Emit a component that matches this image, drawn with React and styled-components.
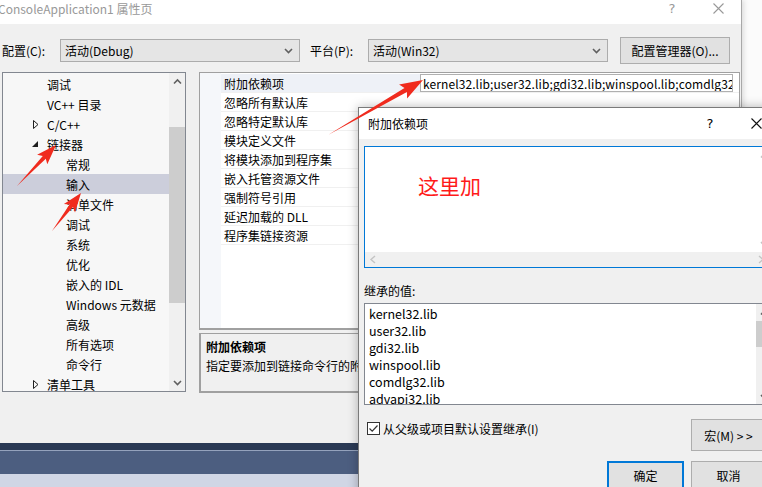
import React from "react"
import styled, { createGlobalStyle } from "styled-components"

// -----------------------------------------------------------------------------
// Global
// -----------------------------------------------------------------------------

const GlobalStyle = createGlobalStyle`
  html, body {
    margin: 0;
    padding: 0;
  }
  body {
    font-family: "Noto Sans CJK SC", "Noto Sans", sans-serif;
    font-size: 12px;
    color: #000;
  }
`

// -----------------------------------------------------------------------------
// Small drawings
// -----------------------------------------------------------------------------

const Chevron = ({ dir = "down", color = "#606060", size = 9 }) => {
  const pts = dir === "down" ? "1,3 4.5,6.5 8,3" : "1,6.5 4.5,3 8,6.5"
  return (
    <svg width={size} height={size} viewBox="0 0 9 9">
      <polyline points={pts} fill="none" stroke={color} strokeWidth="1.6" />
    </svg>
  )
}

const SideChevron = ({ dir = "left" }) => {
  const pts = dir === "left" ? "6,1 2,4.5 6,8" : "3,1 7,4.5 3,8"
  return (
    <svg width="9" height="9" viewBox="0 0 9 9">
      <polyline points={pts} fill="none" stroke="#c4c4c4" strokeWidth="1.4" />
    </svg>
  )
}

const CloseCross = ({ color }) => (
  <svg width="11" height="11" viewBox="0 0 11 11">
    <path d="M0.5 0.5 L10.5 10.5 M10.5 0.5 L0.5 10.5" stroke={color} strokeWidth="1.1" fill="none" />
  </svg>
)

const Expander = ({ open }) =>
  open ? (
    <svg width="7" height="7" viewBox="0 0 7 7">
      <polygon points="6,0 6,6 0,6" fill="#1e1e1e" />
    </svg>
  ) : (
    <svg width="6" height="9" viewBox="0 0 6 9">
      <polygon points="0.5,0.5 5,4.5 0.5,8.5" fill="none" stroke="#1e1e1e" />
    </svg>
  )

const arrowPoints = (tx, ty, hx, hy, hl, hw) => {
  const len = Math.hypot(hx - tx, hy - ty)
  const ux = (hx - tx) / len
  const uy = (hy - ty) / len
  const nx = -uy
  const ny = ux
  const bx = hx - ux * hl
  const by = hy - uy * hl
  const sw = hw * 0.3
  const wx = bx - ux * 3
  const wy = by - uy * 3
  return [
    [tx, ty],
    [bx + nx * sw, by + ny * sw],
    [wx + nx * hw, wy + ny * hw],
    [hx, hy],
    [wx - nx * hw, wy - ny * hw],
    [bx - nx * sw, by - ny * sw],
  ]
    .map((p) => p.map((v) => v.toFixed(1)).join(","))
    .join(" ")
}

const ARROWS = [
  { t: [328, 135], h: [423, 80], hl: 20, hw: 8 },
  { t: [17, 186], h: [56, 145], hl: 17, hw: 7 },
  { t: [52, 231], h: [81, 193], hl: 16, hw: 7 },
]

// -----------------------------------------------------------------------------
// Sub-components: desktop / main window
// -----------------------------------------------------------------------------

const Desktop = styled.div`
  position: relative;
  width: 762px;
  height: 487px;
  overflow: hidden;
  background: #fbfbfb;
  display: flex;
  flex-direction: column;
`

const TopArea = styled.div`
  display: flex;
  height: 443px;
  flex-shrink: 0;
`

const MainWindow = styled.div`
  width: 741px;
  border-right: 1px solid #a8a8a8;
  box-shadow: 2px 0 5px rgba(0, 0, 0, 0.12);
  background: #f0f0f0;
  display: flex;
  flex-direction: column;
`

const TitleBar = styled.div`
  height: ${({ $h }) => $h || 24}px;
  flex-shrink: 0;
  background: #fff;
  display: flex;
  align-items: ${({ $top }) => ($top ? "flex-start" : "center")};
`

const TitleText = styled.span`
  flex: 1;
  margin-left: -2px;
  line-height: 17px;
  color: ${({ $active }) => ($active ? "#000" : "#999")};
  font-size: 12px;
  padding-left: ${({ $pad }) => $pad || 0}px;
`

const CaptionButton = styled.div`
  width: 46px;
  height: 17px;
  display: flex;
  align-items: center;
  justify-content: center;
  color: ${({ $active }) => ($active ? "#000" : "#999")};
  font-size: 13px;
  font-family: "DejaVu Sans", sans-serif;
`

const ConfigRow = styled.div`
  height: 48px;
  display: flex;
  align-items: center;
  padding: 4px 0 0 2px;
  box-sizing: border-box;
`

const FieldLabel = styled.span`
  width: 58px;
  margin-left: ${({ $gap }) => $gap || 0}px;
`

const Combo = styled.div`
  width: 240px;
  height: 23px;
  box-sizing: border-box;
  border: 1px solid #acacac;
  background: #e5e5e5;
  display: flex;
  align-items: center;
  justify-content: space-between;
  padding: 0 6px 0 4px;
`

const PushButton = styled.div`
  box-sizing: border-box;
  width: ${({ $w }) => $w}px;
  height: ${({ $h }) => $h || 27}px;
  margin-left: ${({ $ml }) => $ml || 0}px;
  margin-top: ${({ $mt }) => $mt || 0}px;
  border: ${({ $default }) => ($default ? "2px solid #0078d7" : "1px solid #adadad")};
  background: #e1e1e1;
  display: flex;
  align-items: center;
  justify-content: center;
  flex-shrink: 0;
  white-space: pre;
`

const Body = styled.div`
  display: flex;
  padding-left: 2px;
  gap: 13px;
`

// Tree ------------------------------------------------------------------------

const Tree = styled.div`
  width: 184px;
  height: 320px;
  box-sizing: border-box;
  border: 1px solid #828790;
  background: #f7f7f7;
  display: flex;
`

const TreeList = styled.div`
  flex: 1;
  padding-top: 1px;
  overflow: hidden;
`

const TreeRow = styled.div`
  height: 20px;
  display: flex;
  align-items: center;
  background: ${({ $selected }) => ($selected ? "#cccedb" : "transparent")};
  white-space: nowrap;
`

const TreeToggle = styled.span`
  width: ${({ $level }) => ($level === 1 ? 44 : 63)}px;
  display: flex;
  justify-content: flex-end;
  padding-right: 8px;
  box-sizing: border-box;
`

const VScroll = styled.div`
  width: ${({ $w }) => $w || 16}px;
  background: ${({ $bg }) => $bg || "#f0f0f0"};
  display: flex;
  flex-direction: column;
  align-items: center;
  flex-shrink: 0;
`

const ScrollArrow = styled.div`
  height: ${({ $h }) => $h || 17}px;
  width: 100%;
  display: flex;
  align-items: center;
  justify-content: center;
  flex-shrink: 0;
`

const ScrollTrack = styled.div`
  flex: 1;
  width: 100%;
  display: flex;
  flex-direction: column;
  align-items: center;
`

const ScrollThumb = styled.div`
  width: ${({ $w }) => $w || 16}px;
  height: ${({ $h }) => $h}px;
  margin-top: ${({ $top }) => $top}px;
  background: #cdcdcd;
`

// Property grid ---------------------------------------------------------------

const RightColumn = styled.div`
  width: 541px;
  display: flex;
  flex-direction: column;
  gap: 3px;
`

const PropGrid = styled.div`
  height: 258px;
  box-sizing: border-box;
  border: 1px solid #a0a0a0;
  border-bottom-width: 2px;
  background: #fff;
  display: flex;
`

const PropMargin = styled.div`
  width: 21px;
  background: #f5f7fa;
`

const PropRows = styled.div`
  flex: 1;
  padding-top: 1px;
`

const PropRow = styled.div`
  height: 19px;
  display: flex;
  box-sizing: border-box;
  border-bottom: 1px solid #f0f0f0;
`

const PropName = styled.div`
  width: 196px;
  padding-left: 3px;
  display: flex;
  align-items: center;
  background: ${({ $selected }) => ($selected ? "#eef1f7" : "#fff")};
  white-space: nowrap;
`

const PropValue = styled.div`
  width: 313px;
  box-sizing: border-box;
  padding-left: 2px;
  display: flex;
  align-items: center;
  white-space: nowrap;
  overflow: hidden;
  letter-spacing: 0.1px;
  border: ${({ $editing }) => ($editing ? "1px solid #b0b0b0" : "none")};
  background: #fff;
`

const DescBox = styled.div`
  width: 160px;
  height: 60px;
  box-sizing: border-box;
  border: 2px solid #a0a0a0;
  border-top-width: 1px;
  border-right: none;
  padding: 3px 0 0 5px;
  line-height: 19px;
  white-space: nowrap;
  overflow: hidden;
`

const DescTitle = styled.div`
  font-weight: bold;
`

// IDE behind ------------------------------------------------------------------

const IdeBand = styled.div`
  height: ${({ $h }) => $h}px;
  background: ${({ $c }) => $c};
  flex-shrink: 0;
`

// -----------------------------------------------------------------------------
// Sub-components: dialog
// -----------------------------------------------------------------------------

const Dialog = styled.div`
  position: absolute;
  left: 358px;
  top: 107px;
  width: 422px;
  height: 392px;
  box-sizing: border-box;
  border: 1px solid #7a7a7a;
  box-shadow: 0 0 10px rgba(0, 0, 0, 0.28);
  background: #f0f0f0;
  display: flex;
  flex-direction: column;
`

const DialogBody = styled.div`
  padding: 7px 5px 0 5px;
  display: flex;
  flex-direction: column;
`

const EditBox = styled.div`
  width: 410px;
  height: 122px;
  box-sizing: border-box;
  border: 1px solid #0078d7;
  background: #fff;
  display: grid;
  grid-template-columns: 1fr 17px;
  grid-template-rows: 1fr 15px;
`

const EditText = styled.div`
  color: #ff1a1a;
  font-size: 21px;
  padding: 23px 0 0 53px;
`

const HScroll = styled.div`
  grid-column: 1 / 3;
  background: #f0f0f0;
  display: flex;
  align-items: center;
  justify-content: space-between;
  padding: 0 8px 0 4px;
`

const SectionLabel = styled.div`
  margin-top: 14px;
  height: 21px;
`

const ListBox = styled.div`
  width: 410px;
  height: 102px;
  box-sizing: border-box;
  border: 1px solid #828790;
  background: #fff;
  display: flex;
`

const ListItems = styled.div`
  flex: 1;
  padding: 1px 0 0 4px;
  overflow: hidden;
  font-size: 12.5px;
`

const ListItem = styled.div`
  height: 17px;
  line-height: 17px;
`

const FooterRow = styled.div`
  display: flex;
  align-items: flex-start;
  padding-right: 8px;
  margin-top: ${({ $mt }) => $mt}px;
  justify-content: ${({ $end }) => ($end ? "flex-end" : "flex-start")};
  gap: 7px;
`

const CheckLabel = styled.label`
  display: flex;
  align-items: center;
  gap: 3px;
  margin: 15px 0 0 3px;
  flex: 1;
`

const CheckBox = styled.span`
  width: 13px;
  height: 13px;
  box-sizing: border-box;
  border: 1px solid #333;
  background: #fff;
  display: flex;
  align-items: center;
  justify-content: center;
`

const ArrowLayer = styled.svg`
  position: absolute;
  left: 0;
  top: 0;
  pointer-events: none;
`

// -----------------------------------------------------------------------------
// Data
// -----------------------------------------------------------------------------

const TREE = [
  { label: "调试", level: 1 },
  { label: "VC++ 目录", level: 1 },
  { label: "C/C++", level: 1, toggle: "closed" },
  { label: "链接器", level: 1, toggle: "open" },
  { label: "常规", level: 2 },
  { label: "输入", level: 2, selected: true },
  { label: "清单文件", level: 2 },
  { label: "调试", level: 2 },
  { label: "系统", level: 2 },
  { label: "优化", level: 2 },
  { label: "嵌入的 IDL", level: 2 },
  { label: "Windows 元数据", level: 2 },
  { label: "高级", level: 2 },
  { label: "所有选项", level: 2 },
  { label: "命令行", level: 2 },
  { label: "清单工具", level: 1, toggle: "closed" },
]

const PROPS = [
  "附加依赖项",
  "忽略所有默认库",
  "忽略特定默认库",
  "模块定义文件",
  "将模块添加到程序集",
  "嵌入托管资源文件",
  "强制符号引用",
  "延迟加载的 DLL",
  "程序集链接资源",
]

const LIBS = ["kernel32.lib", "user32.lib", "gdi32.lib", "winspool.lib", "comdlg32.lib", "advapi32.lib"]

// -----------------------------------------------------------------------------
// Component
// -----------------------------------------------------------------------------

const App = () => {
  return (
    <>
      <GlobalStyle />
      <Desktop>
        <TopArea>
          <MainWindow>
            <TitleBar $top>
              <TitleText>ConsoleApplication1 属性页</TitleText>
              <CaptionButton>?</CaptionButton>
              <CaptionButton>
                <CloseCross color="#999" />
              </CaptionButton>
            </TitleBar>

            <ConfigRow>
              <FieldLabel>配置(C):</FieldLabel>
              <Combo>
                <span>活动(Debug)</span>
                <Chevron />
              </Combo>
              <FieldLabel $gap={10}>平台(P):</FieldLabel>
              <Combo>
                <span>活动(Win32)</span>
                <Chevron />
              </Combo>
              <PushButton $w={110} $ml={12}>配置管理器(O)...</PushButton>
            </ConfigRow>

            <Body>
              <Tree>
                <TreeList>
                  {TREE.map((item, i) => (
                    <TreeRow key={i} $selected={item.selected}>
                      <TreeToggle $level={item.level}>
                        {item.toggle && <Expander open={item.toggle === "open"} />}
                      </TreeToggle>
                      {item.label}
                    </TreeRow>
                  ))}
                </TreeList>
                <VScroll>
                  <ScrollArrow>
                    <Chevron dir="up" />
                  </ScrollArrow>
                  <ScrollTrack>
                    <ScrollThumb $top={37} $h={176} />
                  </ScrollTrack>
                  <ScrollArrow>
                    <Chevron dir="down" />
                  </ScrollArrow>
                </VScroll>
              </Tree>

              <RightColumn>
                <PropGrid>
                  <PropMargin />
                  <PropRows>
                    {PROPS.map((name, i) => (
                      <PropRow key={name}>
                        <PropName $selected={i === 0}>{name}</PropName>
                        <PropValue $editing={i === 0}>
                          {i === 0 ? "kernel32.lib;user32.lib;gdi32.lib;winspool.lib;comdlg32.lib" : ""}
                        </PropValue>
                      </PropRow>
                    ))}
                  </PropRows>
                </PropGrid>
                <DescBox>
                  <DescTitle>附加依赖项</DescTitle>
                  <div>指定要添加到链接命令行的附</div>
                </DescBox>
              </RightColumn>
            </Body>
          </MainWindow>
        </TopArea>

        <IdeBand $h={7} $c="#2b3a55" />
        <IdeBand $h={1} $c="#94a2bc" />
        <IdeBand $h={23} $c="#4c5e80" />
        <IdeBand $h={13} $c="#d0d6e5" />

        <Dialog>
          <TitleBar $h={31}>
            <TitleText $active $pad={11}>附加依赖项</TitleText>
            <CaptionButton $active>?</CaptionButton>
            <CaptionButton $active>
              <CloseCross color="#111" />
            </CaptionButton>
          </TitleBar>
          <DialogBody>
            <EditBox>
              <EditText>这里加</EditText>
              <VScroll $w={17} $bg="#fff">
                <ScrollArrow>
                  <Chevron dir="up" color="#c4c4c4" />
                </ScrollArrow>
                <ScrollTrack />
                <ScrollArrow>
                  <Chevron dir="down" color="#c4c4c4" />
                </ScrollArrow>
              </VScroll>
              <HScroll>
                <SideChevron dir="left" />
                <SideChevron dir="right" />
              </HScroll>
            </EditBox>

            <SectionLabel>继承的值:</SectionLabel>
            <ListBox>
              <ListItems>
                {LIBS.map((lib) => (
                  <ListItem key={lib}>{lib}</ListItem>
                ))}
              </ListItems>
              <VScroll $w={17}>
                <ScrollArrow $h={16}>
                  <Chevron dir="up" />
                </ScrollArrow>
                <ScrollTrack>
                  <ScrollThumb $top={1} $h={26} $w={17} />
                </ScrollTrack>
                <ScrollArrow $h={16}>
                  <Chevron dir="down" />
                </ScrollArrow>
              </VScroll>
            </ListBox>

            <FooterRow $mt={0}>
              <CheckLabel>
                <CheckBox>
                  <svg width="11" height="11" viewBox="0 0 11 11">
                    <polyline points="1.5,5.5 4.2,8.2 9.5,2.5" fill="none" stroke="#333" strokeWidth="1.2" />
                  </svg>
                </CheckBox>
                从父级或项目默认设置继承(I)
              </CheckLabel>
              <PushButton $w={75} $h={32} $mt={14}>
                {"宏(M) > >"}
              </PushButton>
            </FooterRow>
            <FooterRow $mt={10} $end>
              <PushButton $w={77} $h={28} $default>
                确定
              </PushButton>
              <PushButton $w={75} $h={28}>
                取消
              </PushButton>
            </FooterRow>
          </DialogBody>
        </Dialog>

        <ArrowLayer width="762" height="487" viewBox="0 0 762 487">
          {ARROWS.map((a, i) => (
            <polygon key={i} points={arrowPoints(a.t[0], a.t[1], a.h[0], a.h[1], a.hl, a.hw)} fill="#f02b1e" />
          ))}
        </ArrowLayer>
      </Desktop>
    </>
  )
}

export default App
